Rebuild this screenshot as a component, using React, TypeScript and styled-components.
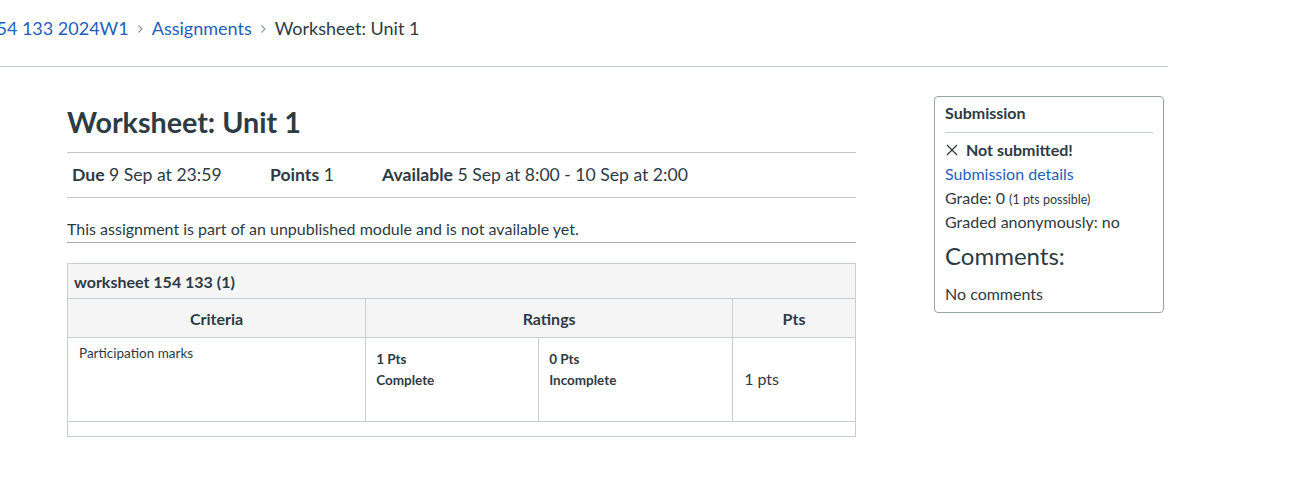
import styled, { createGlobalStyle } from "styled-components";

const GlobalStyle = createGlobalStyle`
  body {
    margin: 0;
    background: #fff;
    font-family: Lato, "Noto Sans", sans-serif;
    color: #2d3b45;
  }
`;

const Page = styled.div`
  width: 1297px;
  height: 494px;
  overflow: hidden;
`;

const Crumbs = styled.nav`
  display: flex;
  align-items: center;
  height: 67px;
  width: 1182px;
  box-sizing: border-box;
  padding-bottom: 11px;
  margin-left: -14px;
  border-bottom: 1px solid #c7cdd1;
  font-size: 18px;
`;

const CrumbLink = styled.a`
  color: #1f5fbd;
  text-decoration: none;
`;

const Sep = styled.span`
  display: inline-flex;
  margin: 2px 8px 0;
`;

const Main = styled.div`
  display: flex;
  align-items: flex-start;
`;

const Content = styled.div`
  margin-left: 67px;
  width: 789px;
`;

const Title = styled.h1`
  margin: 37px 0 0;
  font-size: 28.7px;
  font-weight: 700;
  line-height: 36px;
  padding-bottom: 12px;
  border-bottom: 1px solid #c7c7c7;
`;

const Details = styled.div`
  display: flex;
  height: 45px;
  align-items: center;
  padding-left: 5px;
  padding-bottom: 2px;
  box-sizing: border-box;
  border-bottom: 1px solid #c7c7c7;
  font-size: 17.6px;
`;

const Detail = styled.div<{ $w?: number }>`
  width: ${(p) => (p.$w ? `${p.$w}px` : "auto")};
  b {
    font-weight: 700;
  }
`;

const Notice = styled.div`
  margin-top: 19px;
  padding-bottom: 1px;
  font-size: 16px;
  line-height: 24px;
  border-bottom: 1px solid #a8a8a8;
`;

const Rubric = styled.table`
  margin-top: 20px;
  width: 789px;
  border-collapse: collapse;
  color: #2d3b45;
  td,
  th {
    border: 1px solid #c7cdd1;
  }
`;

const Caption = styled.th`
  background: #f5f5f5;
  text-align: left;
  font-size: 16px;
  font-weight: 700;
  height: 34px;
  padding: 0 6px;
`;

const HeadCell = styled.th<{ $w: number }>`
  background: #f5f5f5;
  width: ${(p) => p.$w}px;
  height: 38px;
  font-size: 16px;
  font-weight: 700;
  padding: 0;
`;

const CriterionCell = styled.td`
  vertical-align: top;
  font-size: 13.5px;
  padding: 7px 11px;
  height: 67px;
`;

const RatingsCell = styled.td`
  padding: 0;
  height: 83px;
`;

const RatingRow = styled.div`
  display: flex;
  height: 83px;
`;

const Rating = styled.div<{ $w: number; $line?: boolean }>`
  width: ${(p) => p.$w}px;
  box-sizing: border-box;
  padding: 11px 10px;
  border-right: ${(p) => (p.$line ? "1px solid #c7cdd1" : "none")};
  font-size: 13.5px;
  font-weight: 700;
  line-height: 21px;
`;

const PtsCell = styled.td`
  font-size: 16px;
  padding: 0 11px 2px;
`;

const FootCell = styled.td`
  height: 14px;
  padding: 0;
`;

const Sidebar = styled.aside`
  margin-left: 78px;
  margin-top: 29px;
  width: 230px;
  box-sizing: border-box;
  border: 1px solid #9aa3ab;
  border-radius: 4px;
  padding: 4px 10px 6px;
  font-size: 16px;
  line-height: 24px;
  color: #2d3b45;
`;

const SideHead = styled.div`
  font-weight: 700;
  font-size: 16px;
  padding-bottom: 7px;
  border-bottom: 1px solid #c7cdd1;
  margin-bottom: 5px;
`;

const Status = styled.div`
  font-weight: 700;
  font-size: 16px;
  display: flex;
  align-items: center;
  gap: 8px;
  padding-left: 1px;
`;

const SideLink = styled.a`
  display: block;
  color: #1f5fbd;
  text-decoration: none;
  font-size: 16px;
`;

const Line = styled.div`
  height: 24px;
`;

const Small = styled.span`
  font-size: 12.5px;
  line-height: 1;
`;

const CommentsHead = styled.div`
  font-size: 24px;
  line-height: 30px;
  margin: 7px 0 11px;
`;

const Chevron = () => (
  <svg width="7" height="10" viewBox="0 0 7 10">
    <path d="M1.5 1.5 L5 5 L1.5 8.5" fill="none" stroke="#8b969e" strokeWidth="1.1" />
  </svg>
);

export default function App() {
  return (
    <Page>
      <GlobalStyle />
      <Crumbs>
        <CrumbLink>154 133 2024W1</CrumbLink>
        <Sep>
          <Chevron />
        </Sep>
        <CrumbLink>Assignments</CrumbLink>
        <Sep>
          <Chevron />
        </Sep>
        <span>Worksheet: Unit 1</span>
      </Crumbs>
      <Main>
        <Content>
          <Title>Worksheet: Unit 1</Title>
          <Details>
            <Detail $w={198}>
              <b>Due</b> 9 Sep at 23:59
            </Detail>
            <Detail $w={112}>
              <b>Points</b> 1
            </Detail>
            <Detail>
              <b>Available</b> 5 Sep at 8:00 - 10 Sep at 2:00
            </Detail>
          </Details>
          <Notice>This assignment is part of an unpublished module and is not available yet.</Notice>
          <Rubric>
            <thead>
              <tr>
                <Caption colSpan={3}>worksheet 154 133 (1)</Caption>
              </tr>
              <tr>
                <HeadCell $w={300}>Criteria</HeadCell>
                <HeadCell $w={366}>Ratings</HeadCell>
                <HeadCell $w={123}>Pts</HeadCell>
              </tr>
            </thead>
            <tbody>
              <tr>
                <CriterionCell>Participation marks</CriterionCell>
                <RatingsCell>
                  <RatingRow>
                    <Rating $w={173} $line>
                      1 Pts
                      <br />
                      Complete
                    </Rating>
                    <Rating $w={193}>
                      0 Pts
                      <br />
                      Incomplete
                    </Rating>
                  </RatingRow>
                </RatingsCell>
                <PtsCell>1 pts</PtsCell>
              </tr>
              <tr>
                <FootCell colSpan={3} />
              </tr>
            </tbody>
          </Rubric>
        </Content>
        <Sidebar>
          <SideHead>Submission</SideHead>
          <Status>
            <svg width="12" height="12" viewBox="0 0 12 12">
              <path d="M1 1 L11 11 M11 1 L1 11" stroke="#2d3b45" strokeWidth="1.3" />
            </svg>
            Not submitted!
          </Status>
          <SideLink>Submission details</SideLink>
          <Line>
            Grade: 0 <Small>(1 pts possible)</Small>
          </Line>
          <Line>Graded anonymously: no</Line>
          <CommentsHead>Comments:</CommentsHead>
          <Line>No comments</Line>
        </Sidebar>
      </Main>
    </Page>
  );
}
